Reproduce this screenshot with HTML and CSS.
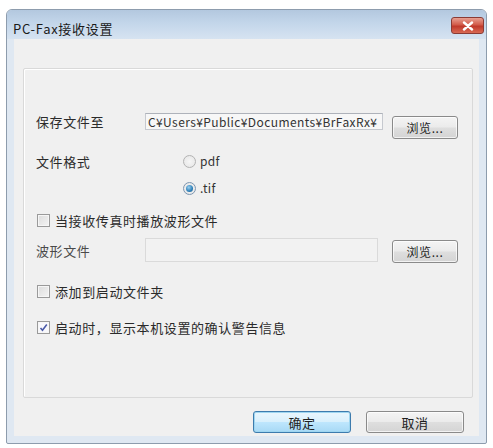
FILE: index.html
```html
<!DOCTYPE html>
<html lang="zh-CN">
<head>
<meta charset="utf-8">
<title>PC-Fax接收设置</title>
<link rel="stylesheet" href="styles.css">
</head>
<body>
<div class="window">
  <div class="titlebar">
    <span class="title">PC-Fax接收设置</span>
    <span class="close">
      <svg width="12" height="10" viewBox="0 0 12 10"><path d="M2 1.5 L10 8.5 M10 1.5 L2 8.5" stroke="#fff" stroke-width="2.4" stroke-linecap="round"/></svg>
    </span>
  </div>
  <div class="client">
    <div class="group">
      <div class="row r1">
        <span class="label lw1">保存文件至</span>
        <div class="field f1">C¥Users¥Public¥Documents¥BrFaxRx¥</div>
        <span class="btn browse b1">浏览...</span>
      </div>
      <div class="row r2">
        <span class="label lw2">文件格式</span>
        <span class="radio"></span><span class="opt">pdf</span>
      </div>
      <div class="row r3">
        <span class="radio on"></span><span class="opt">.tif</span>
      </div>
      <div class="row r4">
        <span class="check"></span><span class="ctext">当接收传真时播放波形文件</span>
      </div>
      <div class="row r5">
        <span class="label lw1 dim">波形文件</span>
        <div class="field f2 disabled"></div>
        <span class="btn browse b2">浏览...</span>
      </div>
      <div class="row r6">
        <span class="check"></span><span class="ctext">添加到启动文件夹</span>
      </div>
      <div class="row r7">
        <span class="check on">
          <svg width="11" height="11" viewBox="0 0 11 11"><path d="M2.5 6 L4.5 8.3 L8.8 2.5" fill="none" stroke="#4a5aa8" stroke-width="1.6"/></svg>
        </span><span class="ctext">启动时，显示本机设置的确认警告信息</span>
      </div>
    </div>
    <div class="actions">
      <span class="btn push default">确定</span>
      <span class="btn push">取消</span>
    </div>
  </div>
</div>
</body>
</html>
```
FILE: styles.css
```css
* { box-sizing: border-box; }
html, body { margin: 0; padding: 0; background: #fff; }
body {
  font-family: "Noto Sans CJK SC", "Noto Sans", sans-serif;
  font-size: 13px;
  letter-spacing: 0.6px;
  color: #2a2a2a;
}
.window {
  margin: 9px 0 0 6px;
  width: 481px;
  height: 435px;
  border: 1px solid #8d9cad;
  border-radius: 6px 6px 2px 2px;
  background: #dfe8f2;
  display: flex;
  flex-direction: column;
  overflow: hidden;
}
.titlebar {
  height: 29px;
  flex: none;
  display: flex;
  align-items: flex-start;
  justify-content: space-between;
  background: linear-gradient(to bottom, #b3c8df 0%, #c3d6ea 45%, #d6e3f1 100%);
  padding: 0 2px 0 6px;
}
.title {
  margin-top: 11px;
  line-height: 16px;
  font-size: 13px;
  letter-spacing: 0.7px;
  color: #1a1a1a;
}
.close {
  margin-top: 7px;
  width: 33px;
  height: 17px;
  border: 1px solid #8a3b35;
  border-radius: 3px;
  background: linear-gradient(to bottom, #e8a092 0%, #d25b4a 45%, #c0392b 55%, #d86a54 100%);
  display: flex;
  align-items: center;
  justify-content: center;
}
.client {
  flex: 1;
  margin: 0 7px 7px 7px;
  background: #f0f0f0;
  display: flex;
  flex-direction: column;
}
.group {
  margin: 29px 6px 0 9px;
  height: 330px;
  border: 1px solid #d9d9d9;
  box-shadow: inset 1px 1px 0 #fff;
  border-radius: 2px;
  padding: 44px 0 0 12px;
  display: flex;
  flex-direction: column;
}
.row {
  display: flex;
  align-items: center;
  height: 18px;
}
.r1 { height: 26px; align-items: flex-start; margin-top: 0; }
.r2 { margin-top: 13px; }
.r3 { margin-top: 9px; padding-left: 147px; }
.r4 { margin-top: 14px; padding-left: 1px; }
.r5 { margin-top: 9px; height: 25px; }
.r6 { margin-top: 19px; padding-left: 1px; }
.r7 { margin-top: 18px; padding-left: 1px; }
.label { line-height: 17px; flex: none; }
.lw1 { width: 109px; }
.lw2 { width: 147px; }
.dim { color: #4a4a4a; }
.field {
  flex: none;
  height: 17px;
  border: 1px solid #c6c9cf;
  border-top-color: #aeb2ba;
  background: #f7f7f7;
  font-family: "Noto Sans CJK JP", "Noto Sans", sans-serif;
  font-size: 12px;
  letter-spacing: 0.4px;
  line-height: 15px;
  padding-left: 2px;
  white-space: nowrap;
  overflow: hidden;
  color: #333;
}
.f1 { width: 238px; }
.f2 { width: 233px; height: 24px; align-self: flex-start; }
.disabled { background: #f2f2f2; border-color: #dadada; }
.btn {
  flex: none;
  display: flex;
  align-items: center;
  justify-content: center;
  border: 1px solid #8a8a8a;
  border-radius: 3px;
  background: linear-gradient(to bottom, #f4f4f4 0%, #ebebeb 48%, #dedede 52%, #d4d4d4 100%);
  box-shadow: inset 0 0 0 1px rgba(255,255,255,0.7);
  font-size: 12px;
  color: #1e1e1e;
}
.browse { width: 66px; height: 23px; }
.b1 { margin: 3px 0 0 9px; }
.b2 { margin: 1px 0 0 14px; }
.radio {
  flex: none;
  width: 13px;
  height: 13px;
  border-radius: 50%;
  border: 1px solid #b3b3b3;
  background: radial-gradient(circle at 50% 50%, #f6f6f6 0%, #e4e4e4 100%);
  margin-right: 4px;
  position: relative;
}
.radio.on { border-color: #7d96b0; }
.radio.on::after {
  content: "";
  position: absolute;
  left: 2px; top: 2px;
  width: 7px; height: 7px;
  border-radius: 50%;
  background: radial-gradient(circle at 40% 35%, #9ad0f0 0%, #2e7fb7 60%, #1b5d8c 100%);
}
.opt { font-size: 12px; line-height: 16px; color: #333; letter-spacing: 0.3px; }
.check {
  flex: none;
  width: 13px;
  height: 13px;
  border: 1px solid #9a9a9a;
  background: linear-gradient(135deg, #dcdcdc 0%, #f4f4f4 100%);
  box-shadow: inset 0 0 0 1px #f6f6f6;
  margin-right: 5px;
  display: flex;
  align-items: center;
  justify-content: center;
}
.check.on { background: #f8f8fc; }
.ctext { line-height: 17px; }
.actions {
  display: flex;
  justify-content: flex-end;
  gap: 15px;
  margin-top: 13px;
  padding-right: 15px;
}
.push { width: 98px; height: 22px; font-size: 13px; }
.default {
  border-color: #3d7bad;
  box-shadow: inset 0 0 0 1px #9fd6f0;
  background: linear-gradient(to bottom, #eaf6fd 0%, #d9f0fc 48%, #bee6fd 52%, #a7d9f5 100%);
}
```
